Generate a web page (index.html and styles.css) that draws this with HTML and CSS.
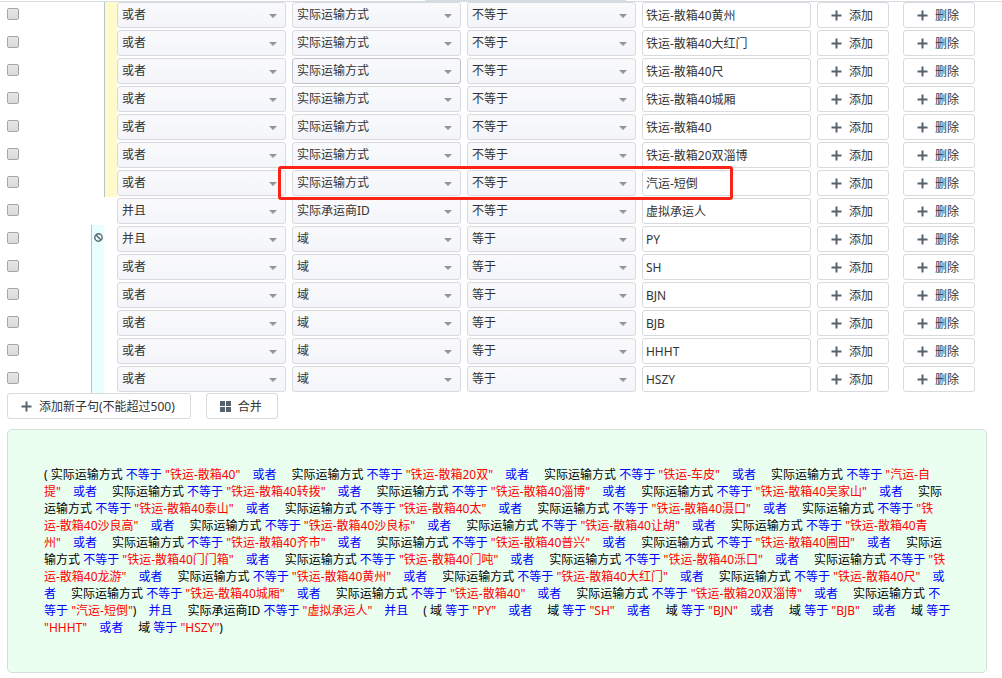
FILE: index.html
```html
<!DOCTYPE html>
<html lang="zh-CN">
<head>
<meta charset="utf-8">
<title>条件设置</title>
<link rel="stylesheet" href="styles.css">
</head>
<body>
<div class="tabs-edge"></div>
<main class="page">
  <form class="rows" id="rows"></form>
  <div class="toolbar">
    <button type="button" class="btn"><svg class="icon" viewBox="0 0 11 11" aria-hidden="true"><path d="M4.5 0.5h2v4h4v2h-4v4h-2v-4h-4v-2h4z"/></svg>添加新子句(不能超过500)</button>
    <button type="button" class="btn"><svg class="icon" viewBox="0 0 11 11" aria-hidden="true"><path d="M0 0h5v5H0zM6 0h5v5H6zM0 6h5v5H0zM6 6h5v5H6z"/></svg>合并</button>
  </div>
  <p class="summary" id="summary"></p>
</main>
<script src="app.js"></script>
</body>
</html>
```

FILE: styles.css
```css
* { box-sizing: border-box; }

body {
  margin: 0;
  background: #fff;
  color: #333;
  font: 12px/17px "Noto Sans", "Noto Sans CJK SC", sans-serif;
}

button, input, select { font: inherit; color: inherit; }

.tabs-edge {
  position: relative;
  z-index: 1;
  height: 2px;
  border-bottom: 1px solid #d6dde2;
  background: linear-gradient(#d6dde2, #d6dde2) 425px 0 / 201px 1px no-repeat #fff;
}

.page { padding: 0 15px 5px 7px; }

.rows { margin: -1px 12px 0 0; }

.row { display: flex; }

.lead {
  flex: none;
  display: grid;
  grid-template-columns: 84px 13px 13px;
  width: 110px;
  height: 28px;
}

.check {
  appearance: none;
  width: 12px;
  height: 12px;
  margin: 7px 0 0;
  border: 1px solid #a6a6a6;
  border-radius: 2px;
  background: linear-gradient(#e6e6e6, #dadada);
}

.bar { border-left: 1px solid #b9c4c9; }
.bar-outer { grid-column: 2; background: #e8ffff; }
.bar-inner { grid-column: 3; background: #fffacb; }

.ungroup {
  display: block;
  margin: 0;
  padding: 8px 0 0 2px;
  border: 0;
  background: none;
  line-height: 0;
}

.ungroup svg { width: 9px; height: 9px; fill: none; stroke: #596670; stroke-width: 1.4; }

.fields {
  position: relative;
  flex: 1;
  display: grid;
  grid-template-columns: repeat(4, minmax(0, 1fr));
  gap: 6px;
  padding: 1px 0;
}

.field {
  width: 100%;
  height: 26px;
  margin: 0;
  border: 1px solid #d9dade;
  border-radius: 3px;
  outline: 0;
}

.select {
  appearance: none;
  padding: 0 20px 2px 4px;
  background:
    url("data:image/svg+xml,%3Csvg xmlns='http://www.w3.org/2000/svg' width='8' height='4'%3E%3Cpath d='M0 0h8L4 4z' fill='%23949494'/%3E%3C/svg%3E") right 8px top 11px no-repeat,
    linear-gradient(#fafafc, #f3f5fa);
}

.select.hover { border-color: #bfc3ca; }

.text { padding: 0 3px; background: #fff; }

.mark {
  position: absolute;
  z-index: 1;
  top: -3px;
  bottom: -3px;
  left: 161px;
  right: 78px;
  border: 3px solid #fb2316;
  border-radius: 3px;
  pointer-events: none;
}

.actions { display: flex; gap: 14px; padding: 1px 0 1px 6px; }

.btn {
  display: flex;
  align-items: center;
  justify-content: center;
  gap: 7px;
  min-width: 72px;
  height: 26px;
  margin: 0;
  padding: 0 15px 0 13px;
  border: 1px solid #d9dade;
  border-radius: 3px;
  background: #fff;
  white-space: nowrap;
}

.icon { flex: none; width: 11px; height: 11px; fill: #56636d; }

.toolbar { display: flex; gap: 15px; }

.summary {
  margin: 10px 0 0;
  padding: 36px;
  border: 1px solid #d9dcdc;
  border-radius: 5px;
  background: #ebfff0;
  color: #000;
  white-space: nowrap;
}

.op, .join { color: #00f; }
.join { margin: 0 15px 0 12px; }
.value { color: #f00; }
```

FILE: app.js
```js
const MODE = '实际运输方式';
const NOT = '不等于';

const rows = [
  ['或者', MODE, NOT, '铁运-散箱40黄州', 'inner'],
  ['或者', MODE, NOT, '铁运-散箱40大红门', 'inner'],
  ['或者', MODE, NOT, '铁运-散箱40尺', 'inner', 'hover'],
  ['或者', MODE, NOT, '铁运-散箱40城厢', 'inner'],
  ['或者', MODE, NOT, '铁运-散箱40', 'inner'],
  ['或者', MODE, NOT, '铁运-散箱20双淄博', 'inner'],
  ['或者', MODE, NOT, '汽运-短倒', 'inner', 'mark'],
  ['并且', '实际承运商ID', NOT, '虚拟承运人', ''],
  ['并且', '域', '等于', 'PY', 'outer', 'ungroup'],
  ['或者', '域', '等于', 'SH', 'outer'],
  ['或者', '域', '等于', 'BJN', 'outer'],
  ['或者', '域', '等于', 'BJB', 'outer'],
  ['或者', '域', '等于', 'HHHT', 'outer'],
  ['或者', '域', '等于', 'HSZY', 'outer']
];

const plus = '<svg class="icon" viewBox="0 0 11 11" aria-hidden="true"><path d="M4.5 0.5h2v4h4v2h-4v4h-2v-4h-4v-2h4z"/></svg>';
const ban = '<button type="button" class="ungroup" aria-label="取消合并"><svg viewBox="0 0 9 9"><circle cx="4.5" cy="4.5" r="3.7"/><path d="M2 2l5 5"/></svg></button>';

const select = (label, value, extra = '') =>
  `<select class="field select ${extra}" aria-label="${label}"><option>${value}</option></select>`;

document.getElementById('rows').innerHTML = rows.map(([join, field, op, value, group, state]) => `
  <div class="row">
    <div class="lead">
      <input class="check" type="checkbox" aria-label="选择条件">
      ${group ? `<div class="bar bar-${group}">${state === 'ungroup' ? ban : ''}</div>` : ''}
    </div>
    <div class="fields">
      ${select('关系', join)}
      ${select('字段', field, state === 'hover' ? 'hover' : '')}
      ${select('运算符', op)}
      <input class="field text" type="text" aria-label="值" value="${value}">
      ${state === 'mark' ? '<span class="mark"></span>' : ''}
    </div>
    <div class="actions">
      <button type="button" class="btn">${plus}添加</button>
      <button type="button" class="btn">${plus}删除</button>
    </div>
  </div>`).join('');

// A "/" marks the place where the summary starts a new line.
const transport = [
  [MODE, NOT, '铁运-散箱40'], [MODE, NOT, '铁运-散箱20双'], [MODE, NOT, '铁运-车皮'], [MODE, NOT, '汽运-自/提'],
  [MODE, NOT, '铁运-散箱40转拨'], [MODE, NOT, '铁运-散箱40淄博'], [MODE, NOT, '铁运-散箱40吴家山'],
  ['实际/运输方式', NOT, '铁运-散箱40泰山'], [MODE, NOT, '铁运-散箱40太'], [MODE, NOT, '铁运-散箱40滠口'],
  [MODE, NOT, '铁/运-散箱40沙良高'], [MODE, NOT, '铁运-散箱40沙良标'], [MODE, NOT, '铁运-散箱40让胡'],
  [MODE, NOT, '铁运-散箱40青/州'], [MODE, NOT, '铁运-散箱40齐市'], [MODE, NOT, '铁运-散箱40普兴'],
  [MODE, NOT, '铁运-散箱40圃田'], ['实际运/输方式', NOT, '铁运-散箱40门门箱'], [MODE, NOT, '铁运-散箱40门吨'],
  [MODE, NOT, '铁运-散箱40泺口'], [MODE, NOT, '铁/运-散箱40龙游'], [MODE, NOT, '铁运-散箱40黄州'],
  [MODE, NOT, '铁运-散箱40大红门'], [MODE, NOT, '铁运-散箱40尺'], [MODE, NOT, '铁运-散箱40城厢', '或/者'],
  [MODE, NOT, '铁运-散箱40'], [MODE, NOT, '铁运-散箱20双淄博'], [MODE, '不/等于', '汽运-短倒']
];
const domains = [
  ['域', '等于', 'PY'], ['域', '等于', 'SH'], ['域', '等于', 'BJN'], ['域', '等于', 'BJB'],
  ['域', '等于/', 'HHHT'], ['域', '等于', 'HSZY']
];

const joiner = text => `<span class="join">${text}</span>`;
const clause = ([field, op, value]) =>
  `${field} <span class="op">${op}</span> <span class="value">"${value}"</span>`;
const group = list => '( ' + list.map((item, i) =>
  (i ? joiner(item[3] || '或者') : '') + clause(item)).join('') + ')';

const root = document.getElementById('summary');
root.innerHTML = [
  group(transport),
  clause(['实际承运商ID', NOT, '虚拟承运人']),
  group(domains)
].join(joiner('并且')).replace(/([^<])\/(?![a-z])/g, '$1<br>');
```
